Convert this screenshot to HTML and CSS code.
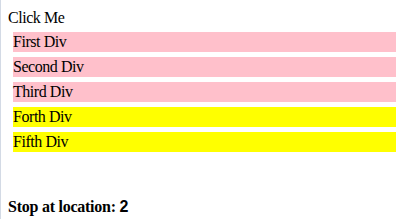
FILE: index.html
```html
<!DOCTYPE html>
<html lang="en">
<head>
  <meta charset="UTF-8">
  <title>Click Me</title>
  <link rel="stylesheet" href="styles.css">
</head>
<body>
<div class="page">
  <div class="trigger">Click Me</div>
  <div class="box pink">First Div</div>
  <div class="box pink">Second Div</div>
  <div class="box pink">Third Div</div>
  <div class="box yellow">Forth Div</div>
  <div class="box yellow">Fifth Div</div>
  <p class="status">Stop at location: <span id="location">2</span></p>
</div>
</body>
</html>
```

FILE: styles.css
```css
html, body {
  margin: 0;
  padding: 0;
  background-color: #fff;
}

body {
  font-family: "Liberation Serif", "Times New Roman", serif;
  font-size: 16px;
  color: #000;
  letter-spacing: -0.45px;
}

.page {
  border-left: 1px solid #d3dae5;
  padding: 8px 1px 8px 7px;
  min-height: 203px;
}

.trigger {
  line-height: 19px;
}

.box {
  margin: 5px;
  height: 20px;
  line-height: 20px;
}

.pink {
  background-color: #ffc0cb; /* pink */
}

.yellow {
  background-color: #ffff00;
}

.status {
  margin: 46px 0 0 0;
  font-weight: bold;
  letter-spacing: -0.25px;
}

#location {
  font-family: "Liberation Sans", Arial, sans-serif;
}
```
